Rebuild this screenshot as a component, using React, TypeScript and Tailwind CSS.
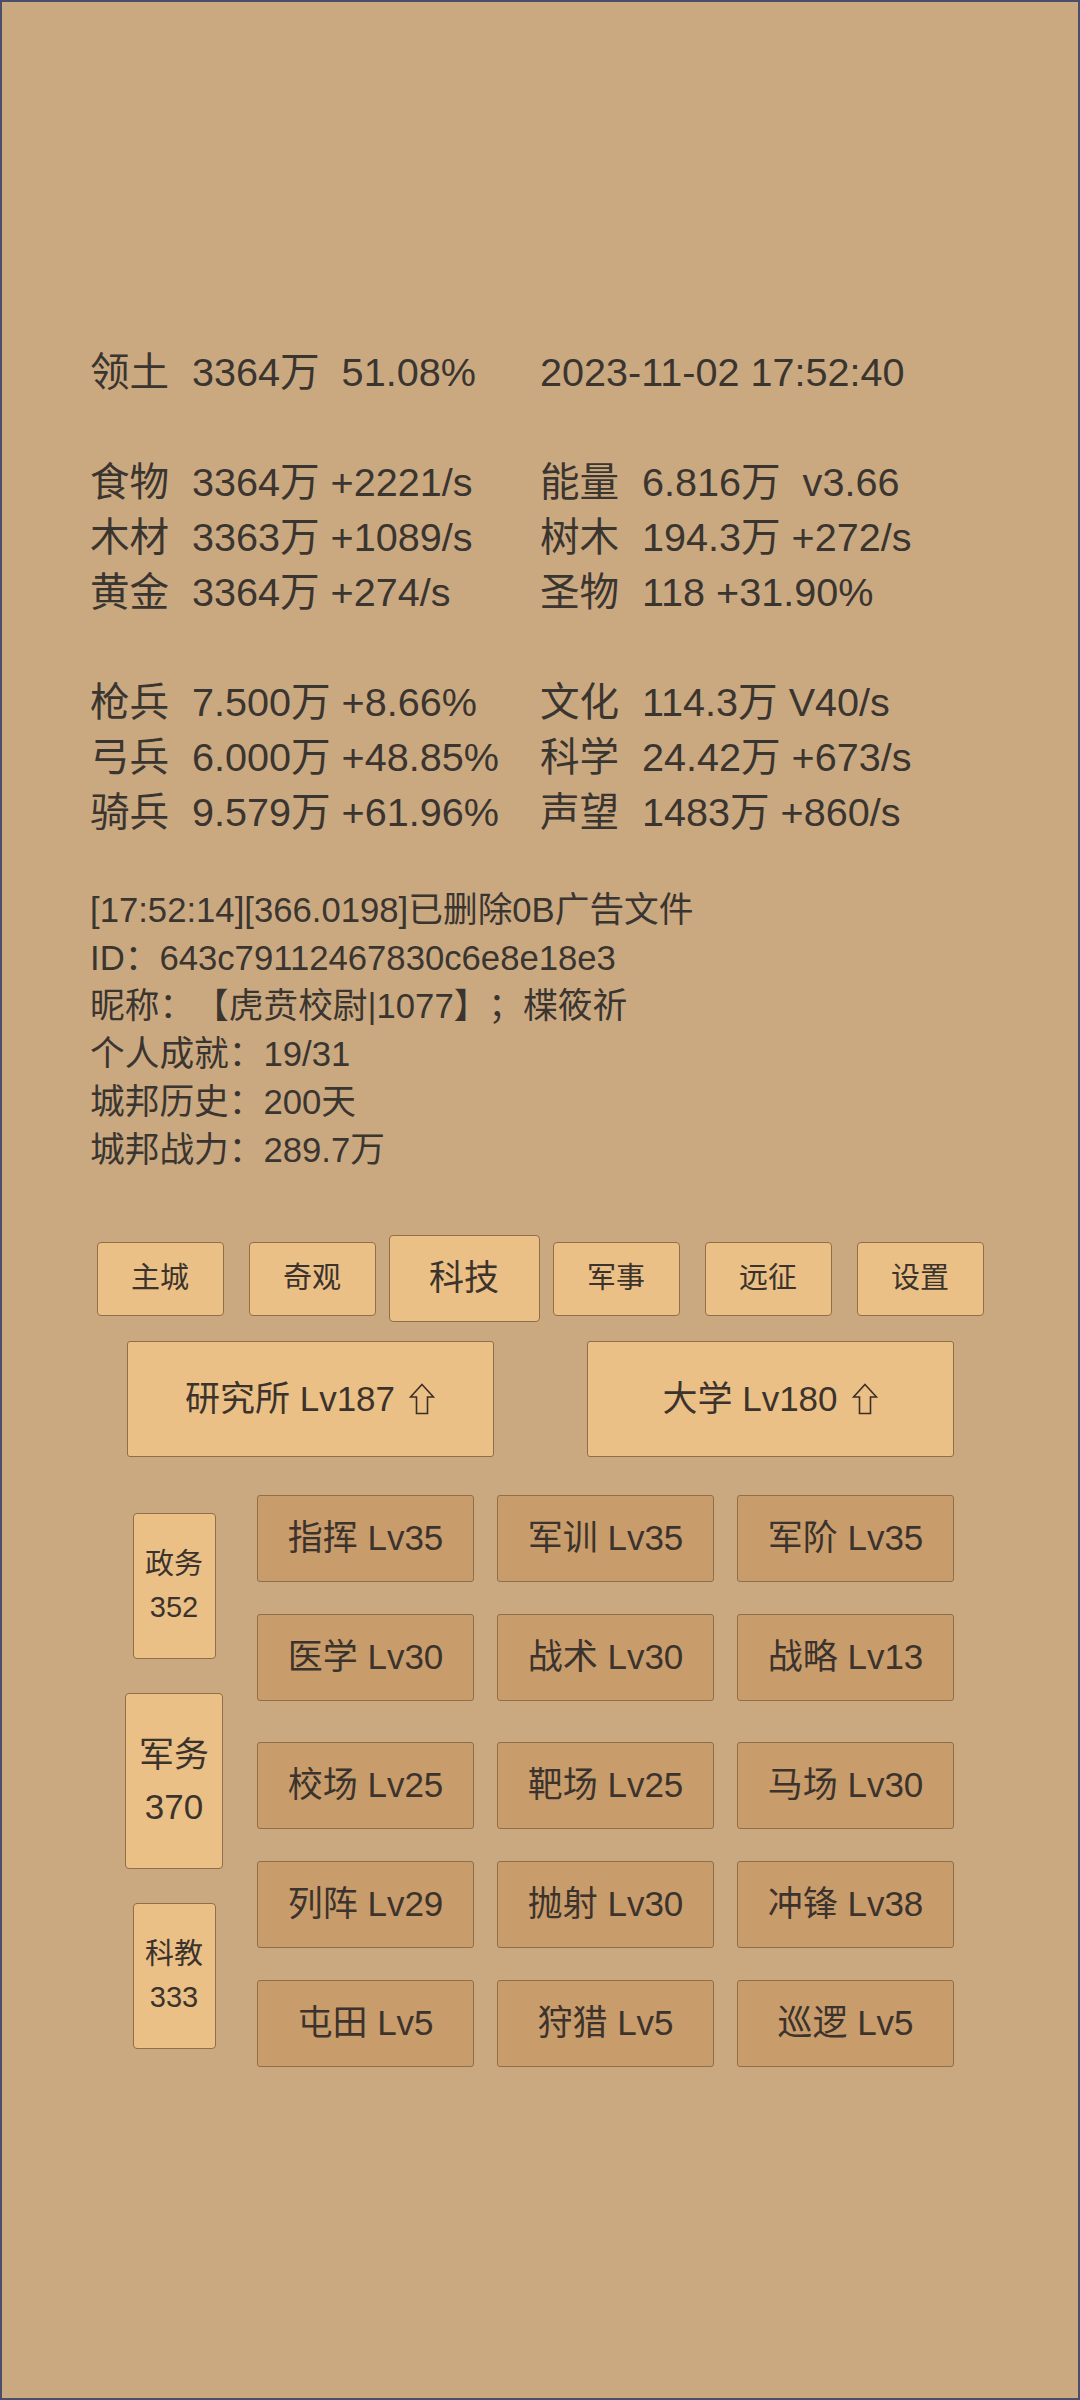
import React from "react";

const stats: [string, string, string, string][] = [
  ["领土", "3364万  51.08%", "", "2023-11-02 17:52:40"],
  ["", "", "", ""],
  ["食物", "3364万 +2221/s", "能量", "6.816万  v3.66"],
  ["木材", "3363万 +1089/s", "树木", "194.3万 +272/s"],
  ["黄金", "3364万 +274/s", "圣物", "118 +31.90%"],
  ["", "", "", ""],
  ["枪兵", "7.500万 +8.66%", "文化", "114.3万 V40/s"],
  ["弓兵", "6.000万 +48.85%", "科学", "24.42万 +673/s"],
  ["骑兵", "9.579万 +61.96%", "声望", "1483万 +860/s"],
];

const logs = [
  "[17:52:14][366.0198]已删除0B广告文件",
  "ID：643c79112467830c6e8e18e3",
  "昵称：【虎贲校尉|1077】；楪筱祈",
  "个人成就：19/31",
  "城邦历史：200天",
  "城邦战力：289.7万",
];

const tabs = ["主城", "奇观", "科技", "军事", "远征", "设置"];
const activeTab = "科技";

const sides = [
  { name: "政务", value: 352 },
  { name: "军务", value: 370 },
  { name: "科教", value: 333 },
];
const activeSide = "军务";

const groupA = [
  ["指挥 Lv35", "军训 Lv35", "军阶 Lv35"],
  ["医学 Lv30", "战术 Lv30", "战略 Lv13"],
];
const groupB = [
  ["校场 Lv25", "靶场 Lv25", "马场 Lv30"],
  ["列阵 Lv29", "抛射 Lv30", "冲锋 Lv38"],
  ["屯田 Lv5", "狩猎 Lv5", "巡逻 Lv5"],
];

const UpArrow = () => (
  <svg width="26" height="32" viewBox="0 0 26 32" className="ml-[14px] shrink-0">
    <polygon
      points="13,1.5 24.5,14 18.5,14 18.5,30.5 7.5,30.5 7.5,14 1.5,14"
      fill="none"
      stroke="#3a2f26"
      strokeWidth="1.6"
      strokeLinejoin="miter"
    />
  </svg>
);

const StatCell = ({ label, value }: { label: string; value: string }) => (
  <div className="flex whitespace-pre">
    {label && <span className="w-[102px] shrink-0">{label}</span>}
    <span>{value}</span>
  </div>
);

const LevelButton = ({ text }: { text: string }) => (
  <button className="w-[217px] h-[87px] flex items-center justify-center rounded-[3px] border border-[#8f6e48] bg-[#c99c6b] text-[35px] text-[#3b332c]">
    {text}
  </button>
);

export default function App() {
  return (
    <div className="w-[1080px] h-[2400px] border-2 border-[#4b4e6b] bg-[#caa981] text-[#3b3530] font-['Liberation_Sans','Noto_Sans_CJK_SC',sans-serif] [text-spacing-trim:space-all] overflow-hidden">
      {/* 资源 */}
      <div className="pt-[343px] pl-[88px] text-[39.6px] leading-[55px]">
        {stats.map((row, i) => (
          <div key={i} className="grid grid-cols-[450px_1fr] h-[55px]">
            <StatCell label={row[0]} value={row[1]} />
            <StatCell label={row[2]} value={row[3]} />
          </div>
        ))}
      </div>

      {/* 日志 */}
      <div className="mt-[46px] pl-[88px] text-[34.7px] leading-[48px]">
        {logs.map((l) => (
          <div key={l} className="whitespace-pre">
            {l}
          </div>
        ))}
      </div>

      {/* 标签栏 */}
      <div className="mt-[61px] flex justify-center items-center h-[87px]">
        {tabs.map((t) => (
          <div key={t} className="w-[152px] flex justify-center">
            {t === activeTab ? (
              <button className="w-[151px] h-[87px] rounded-[4px] border border-[#8f6e48] bg-[#ebc086] text-[35px] text-[#3b332c]">
                {t}
              </button>
            ) : (
              <button className="w-[127px] h-[74px] rounded-[4px] border border-[#8f6e48] bg-[#ebc086] text-[29px] text-[#3b332c]">
                {t}
              </button>
            )}
          </div>
        ))}
      </div>

      {/* 建筑 */}
      <div className="mt-[19px] flex justify-center gap-[93px]">
        {["研究所 Lv187", "大学 Lv180"].map((b) => (
          <button
            key={b}
            className="w-[367px] h-[116px] flex items-center justify-center rounded-[3px] border border-[#8f6e48] bg-[#ebc086] text-[35px] text-[#3b332c]"
          >
            <span>{b}</span>
            <UpArrow />
          </button>
        ))}
      </div>

      {/* 科技 */}
      <div className="mt-[38px] pl-[123px] flex gap-[34px]">
        <div className="w-[98px] flex flex-col items-center justify-center gap-[34px]">
          {sides.map((s) =>
            s.name === activeSide ? (
              <button
                key={s.name}
                className="w-[98px] h-[176px] flex flex-col items-center justify-center rounded-[4px] border border-[#8f6e48] bg-[#ebc086] text-[35px] leading-[52px] text-[#3b332c]"
              >
                <span>{s.name}</span>
                <span>{s.value}</span>
              </button>
            ) : (
              <button
                key={s.name}
                className="w-[83px] h-[146px] flex flex-col items-center justify-center rounded-[4px] border border-[#8f6e48] bg-[#ebc086] text-[29px] leading-[43px] text-[#3b332c]"
              >
                <span>{s.name}</span>
                <span>{s.value}</span>
              </button>
            )
          )}
        </div>

        <div className="flex flex-col gap-[41px]">
          <div className="flex flex-col gap-[32px]">
            {groupA.map((row, i) => (
              <div key={i} className="flex gap-[23px]">
                {row.map((t) => (
                  <LevelButton key={t} text={t} />
                ))}
              </div>
            ))}
          </div>
          <div className="flex flex-col gap-[32px]">
            {groupB.map((row, i) => (
              <div key={i} className="flex gap-[23px]">
                {row.map((t) => (
                  <LevelButton key={t} text={t} />
                ))}
              </div>
            ))}
          </div>
        </div>
      </div>
    </div>
  );
}
